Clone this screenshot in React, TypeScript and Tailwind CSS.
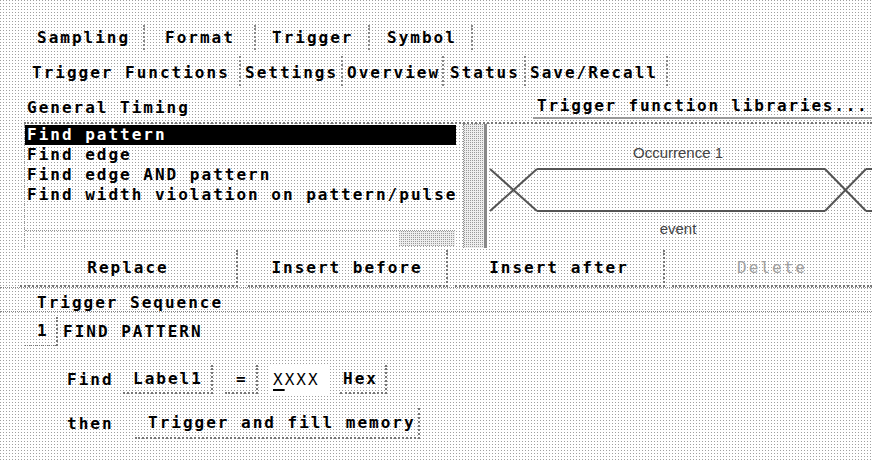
import React from 'react';

const dots = 'bg-white bg-[conic-gradient(at_1px_1px,transparent_75%,#a0a0a0_0)] bg-[length:3px_3px]';
const denseDots = 'bg-[#eeeeee] bg-[conic-gradient(at_1px_1px,transparent_75%,#999999_0)] bg-[length:2px_2px]';

const topTabs = [
  { label: 'Sampling', w: 'w-[126px]', pl: 'pl-[18px]' },
  { label: 'Format', w: 'w-[111px]', pl: 'pl-[20px]' },
  { label: 'Trigger', w: 'w-[114px]', pl: 'pl-[16px]' },
  { label: 'Symbol', w: 'w-[103px]', pl: 'pl-[17px]' },
];

const subTabs = [
  { label: 'Trigger Functions', w: 'w-[214px]', pl: 'pl-[5px]' },
  { label: 'Settings', w: 'w-[102px]', pl: 'pl-[4px]' },
  { label: 'Overview', w: 'w-[101px]', pl: 'pl-[4px]' },
  { label: 'Status', w: 'w-[82px]', pl: 'pl-[6px]' },
  { label: 'Save/Recall', w: 'w-[142px]', pl: 'pl-[4px]' },
];

const functions = ['Find pattern', 'Find edge', 'Find edge AND pattern', 'Find width violation on pattern/pulse'];

const btn = 'h-full flex items-center border-b-2 border-r-2 border-dotted border-[#777]';

function Diagram() {
  return (
    <svg width="385" height="124" viewBox="0 0 385 124" className="block">
      <g stroke="#555" strokeWidth="2" fill="none">
        <line x1="3" y1="45" x2="50" y2="87" />
        <line x1="3" y1="87" x2="50" y2="45" />
        <line x1="50" y1="45" x2="338" y2="45" />
        <line x1="50" y1="87" x2="338" y2="87" />
        <line x1="338" y1="45" x2="379" y2="87" />
        <line x1="338" y1="87" x2="379" y2="45" />
        <line x1="379" y1="45" x2="390" y2="45" />
        <line x1="379" y1="87" x2="390" y2="87" />
      </g>
      <g fill="#444" fontSize="15" fontWeight="400" letterSpacing="0" fontFamily="'Liberation Sans', Arial, sans-serif" textAnchor="middle">
        <text x="191" y="34">Occurrence 1</text>
        <text x="191" y="110">event</text>
      </g>
    </svg>
  );
}

export default function App() {
  return (
    <div className={`w-[872px] h-[461px] overflow-hidden flex flex-col whitespace-nowrap text-black font-['DejaVu_Sans_Mono',monospace] font-bold text-[16px] leading-none tracking-[2px] ${dots}`}>
      {/* top tabs */}
      <div className="mt-[25px] h-[25px] flex pl-[19px]">
        {topTabs.map((t) => (
          <div key={t.label} className={`${t.w} ${t.pl} flex items-center border-r-2 border-dotted border-[#888]`}>
            {t.label}
          </div>
        ))}
      </div>

      {/* sub tabs */}
      <div className="mt-[6px] h-[30px] flex pl-[27px]">
        {subTabs.map((t) => (
          <div key={t.label} className={`${t.w} ${t.pl} pt-[4px] flex items-center border-r-2 border-dotted border-[#888]`}>
            {t.label}
          </div>
        ))}
      </div>

      {/* group header */}
      <div className="h-[36px] flex">
        <div className="pl-[27px] pt-[14px]">General Timing</div>
        <div className="ml-auto w-[339px] h-[33px] pl-[4px] pt-[12px] tracking-[1.8px] border-b-2 border-[#999]">
          Trigger function libraries...
        </div>
      </div>

      {/* list + diagram */}
      <div className="h-[126px] flex ml-[24px] border-t-2 border-dotted border-[#777]">
        <div className="w-[439px] flex flex-col border-l border-dotted border-[#999] pt-[1px]">
          {functions.map((f, i) => (
            <div
              key={f}
              className={`h-[20px] w-[431px] pl-[2px] flex items-center ${i === 0 ? 'bg-black text-white' : ''}`}
            >
              {f}
            </div>
          ))}
          <div className="mt-auto mb-[2px] h-[16px] w-[430px] flex border-t border-dotted border-[#999]">
            <div className="flex-1" />
            <div className={`w-[56px] ${denseDots}`} />
          </div>
        </div>
        <div className={`w-[21px] ${denseDots} border-l border-dotted border-[#888]`} />
        <div className="flex-1 overflow-hidden border-l-[3px] border-[#888]">
          <Diagram />
        </div>
      </div>

      {/* buttons */}
      <div className="h-[40px] flex pl-[20px] pt-[2px] border-b border-dotted border-[#888]">
        <div className={`w-[218px] justify-center ${btn}`}>Replace</div>
        <div className={`ml-[10px] w-[200px] justify-center ${btn}`}>Insert before</div>
        <div className={`ml-[7px] w-[210px] justify-center ${btn}`}>Insert after</div>
        <div className="ml-[7px] w-[200px] h-full flex items-center justify-center border-b-2 border-dotted border-[#777] text-[#a0a0a0] font-normal">Delete</div>
      </div>

      {/* sequence header */}
      <div className="h-[24px] pl-[37px] pt-[7px] border-b border-dotted border-[#888]">Trigger Sequence</div>

      {/* sequence body */}
      <div className="flex flex-col">
        <div className="mt-[5px] h-[29px] flex items-center">
          <div className="ml-[25px] w-[33px] h-full pl-[12px] flex items-center border-b border-r-2 border-dotted border-[#777]">1</div>
          <div className="pl-[5px]">FIND PATTERN</div>
        </div>

        <div className="mt-[19px] h-[29px] flex items-center pl-[67px]">
          <div className="w-[56px]">Find</div>
          <div className={`w-[90px] pl-[10px] ${btn}`}>Label1</div>
          <div className={`ml-[12px] w-[33px] pl-[11px] ${btn}`}>=</div>
          <div className="ml-[10px] w-[60px] h-full pl-[5px] flex items-center bg-white font-normal">
            <span className="underline decoration-2 underline-offset-4">X</span>XXX
          </div>
          <div className={`ml-[12px] w-[47px] pl-[3px] ${btn}`}>Hex</div>
        </div>

        <div className="mt-[14px] h-[31px] flex items-center pl-[67px]">
          <div className="w-[68px]">then</div>
          <div className={`w-[285px] pl-[13px] ${btn}`}>Trigger and fill memory</div>
        </div>
      </div>
    </div>
  );
}
